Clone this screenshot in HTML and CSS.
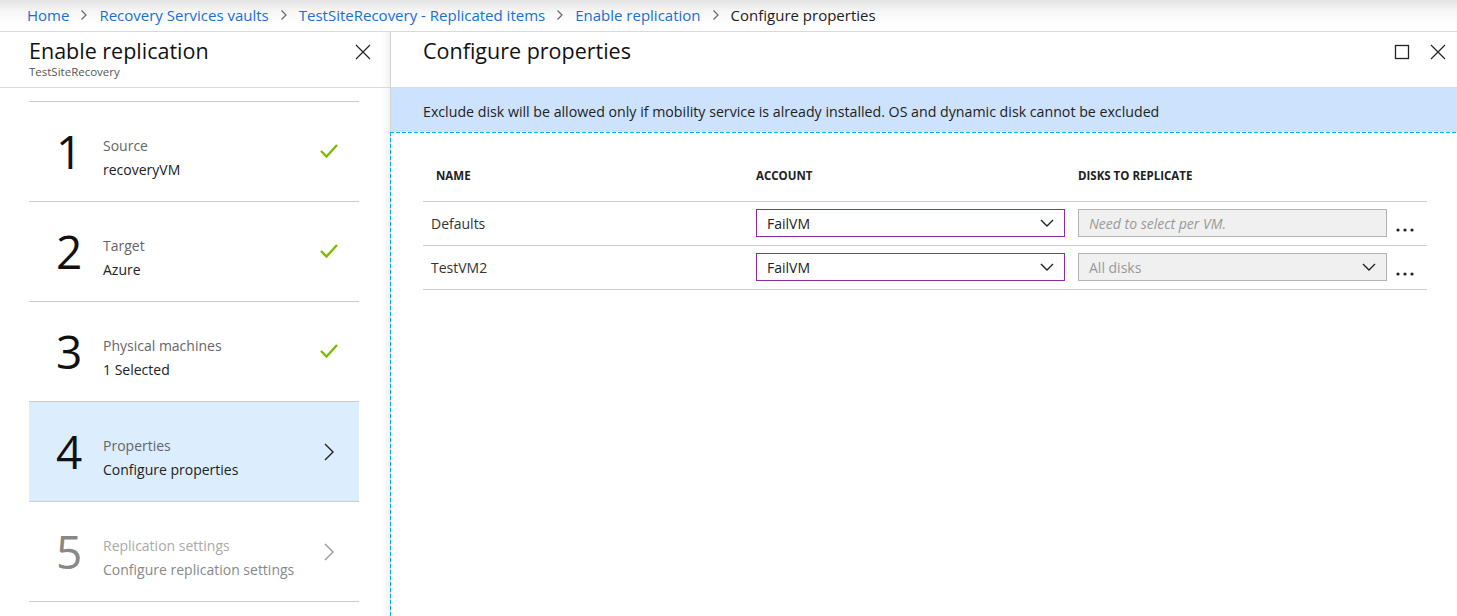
FILE: index.html
```html
<!DOCTYPE html>
<html lang="en">
<head>
<meta charset="utf-8">
<title>Configure properties</title>
<link rel="stylesheet" href="styles.css">
</head>
<body>
<div class="page">
  <nav class="crumbs">
    <a class="crumb-link">Home</a>
    <span class="sep"><svg width="8" height="12" viewBox="0 0 8 12"><path d="M1.5 1.5 L6 6 L1.5 10.5" fill="none" stroke="#666" stroke-width="1.2"/></svg></span>
    <a class="crumb-link">Recovery Services vaults</a>
    <span class="sep"><svg width="8" height="12" viewBox="0 0 8 12"><path d="M1.5 1.5 L6 6 L1.5 10.5" fill="none" stroke="#666" stroke-width="1.2"/></svg></span>
    <a class="crumb-link">TestSiteRecovery - Replicated items</a>
    <span class="sep"><svg width="8" height="12" viewBox="0 0 8 12"><path d="M1.5 1.5 L6 6 L1.5 10.5" fill="none" stroke="#666" stroke-width="1.2"/></svg></span>
    <a class="crumb-link">Enable replication</a>
    <span class="sep"><svg width="8" height="12" viewBox="0 0 8 12"><path d="M1.5 1.5 L6 6 L1.5 10.5" fill="none" stroke="#666" stroke-width="1.2"/></svg></span>
    <span class="crumb-current">Configure properties</span>
  </nav>

  <div class="blades">
    <section class="blade blade-left">
      <header class="blade-head left-head">
        <div class="titles">
          <h1 class="blade-title">Enable replication</h1>
          <div class="blade-sub">TestSiteRecovery</div>
        </div>
        <button class="icon-btn close-left" aria-label="Close">
          <svg width="16" height="16" viewBox="0 0 16 16"><path d="M1 1 L15 15 M15 1 L1 15" stroke="#222" stroke-width="1.2"/></svg>
        </button>
      </header>
      <ol class="steps">
        <li class="step">
          <span class="step-num">1</span>
          <div class="step-text"><div class="step-label">Source</div><div class="step-value">recoveryVM</div></div>
          <svg class="step-icon" width="20" height="16" viewBox="0 0 20 16"><path d="M2 8 L7.5 13.5 L18 2" fill="none" stroke="#7fba00" stroke-width="2.4"/></svg>
        </li>
        <li class="step">
          <span class="step-num">2</span>
          <div class="step-text"><div class="step-label">Target</div><div class="step-value">Azure</div></div>
          <svg class="step-icon" width="20" height="16" viewBox="0 0 20 16"><path d="M2 8 L7.5 13.5 L18 2" fill="none" stroke="#7fba00" stroke-width="2.4"/></svg>
        </li>
        <li class="step">
          <span class="step-num">3</span>
          <div class="step-text"><div class="step-label">Physical machines</div><div class="step-value">1 Selected</div></div>
          <svg class="step-icon" width="20" height="16" viewBox="0 0 20 16"><path d="M2 8 L7.5 13.5 L18 2" fill="none" stroke="#7fba00" stroke-width="2.4"/></svg>
        </li>
        <li class="step step-active">
          <span class="step-num">4</span>
          <div class="step-text"><div class="step-label">Properties</div><div class="step-value">Configure properties</div></div>
          <svg class="step-icon chev" width="12" height="20" viewBox="0 0 12 20"><path d="M2 2 L10 10 L2 18" fill="none" stroke="#222" stroke-width="1.4"/></svg>
        </li>
        <li class="step step-disabled">
          <span class="step-num">5</span>
          <div class="step-text"><div class="step-label">Replication settings</div><div class="step-value">Configure replication settings</div></div>
          <svg class="step-icon chev" width="12" height="20" viewBox="0 0 12 20"><path d="M2 2 L10 10 L2 18" fill="none" stroke="#999" stroke-width="1.4"/></svg>
        </li>
      </ol>
    </section>

    <section class="blade blade-right">
      <header class="blade-head right-head">
        <h1 class="blade-title">Configure properties</h1>
        <div class="head-actions">
          <button class="icon-btn" aria-label="Maximize">
            <svg width="16" height="16" viewBox="0 0 16 16"><rect x="1.5" y="1.5" width="13" height="13" fill="none" stroke="#222" stroke-width="1.3"/></svg>
          </button>
          <button class="icon-btn" aria-label="Close">
            <svg width="16" height="16" viewBox="0 0 16 16"><path d="M1 1 L15 15 M15 1 L1 15" stroke="#222" stroke-width="1.2"/></svg>
          </button>
        </div>
      </header>
      <div class="info">Exclude disk will be allowed only if mobility service is already installed. OS and dynamic disk cannot be excluded</div>
      <div class="content">
        <div class="grid">
          <div class="th">NAME</div>
          <div class="th">ACCOUNT</div>
          <div class="th th-disks">DISKS TO REPLICATE</div>

          <div class="td name">Defaults</div>
          <div class="td"><div class="select account"><span>FailVM</span><svg width="14" height="8" viewBox="0 0 14 8"><path d="M1 1 L7 7 L13 1" fill="none" stroke="#222" stroke-width="1.4"/></svg></div></div>
          <div class="td disks"><div class="select disabled"><span class="placeholder">Need to select per VM.</span></div><svg class="more" width="18" height="4" viewBox="0 0 18 4"><circle cx="2" cy="2" r="1.6" fill="#222"/><circle cx="9" cy="2" r="1.6" fill="#222"/><circle cx="16" cy="2" r="1.6" fill="#222"/></svg></div>

          <div class="td name">TestVM2</div>
          <div class="td"><div class="select account"><span>FailVM</span><svg width="14" height="8" viewBox="0 0 14 8"><path d="M1 1 L7 7 L13 1" fill="none" stroke="#222" stroke-width="1.4"/></svg></div></div>
          <div class="td disks"><div class="select disabled"><span class="dim">All disks</span><svg width="14" height="8" viewBox="0 0 14 8"><path d="M1 1 L7 7 L13 1" fill="none" stroke="#222" stroke-width="1.4"/></svg></div><svg class="more" width="18" height="4" viewBox="0 0 18 4"><circle cx="2" cy="2" r="1.6" fill="#222"/><circle cx="9" cy="2" r="1.6" fill="#222"/><circle cx="16" cy="2" r="1.6" fill="#222"/></svg></div>
        </div>
      </div>
    </section>
  </div>
</div>
</body>
</html>
```

FILE: styles.css
```css
* { box-sizing: border-box; }
html, body { margin: 0; padding: 0; }
body {
  font-family: "Open Sans", "Noto Sans", sans-serif;
  color: #222;
  background: #fff;
  width: 1457px;
  height: 616px;
  overflow: hidden;
}
.page { display: flex; flex-direction: column; height: 616px; }

.crumbs {
  height: 32px;
  flex: none;
  display: flex;
  align-items: center;
  padding: 0 0 2px 27px;
  gap: 11px;
  font-size: 15px;
  background: linear-gradient(#e4e4e4 0px, #f7f7f7 12px, #ffffff 24px);
  border-bottom: 1px solid #d9d9d9;
}
.crumb-link { color: #1a6fd1; }
.crumb-current { color: #222; }
.sep { display: flex; align-items: center; }

.blades { flex: 1; display: flex; min-height: 0; }
.blade { display: flex; flex-direction: column; min-height: 0; }
.blade-left {
  width: 391px;
  flex: none;
  border-right: 1px solid #d4d4d4;
  box-shadow: -8px 0 8px -6px rgba(0,0,0,0.08) inset;
}
.blade-right { flex: 1; min-width: 0; }

.blade-head {
  height: 56px;
  flex: none;
  border-bottom: 1px solid #d9d9d9;
  display: flex;
  justify-content: space-between;
}
.left-head { padding: 5px 18px 0 29px; }
.right-head { padding: 5px 10px 0 32px; }
.blade-title {
  margin: 0;
  font-size: 21.5px;
  font-weight: 400;
  line-height: 28px;
  color: #111;
}
.blade-sub { font-size: 11.5px; color: #555; line-height: 14px; margin-top: 0; }
.icon-btn {
  border: 0;
  background: none;
  padding: 0;
  width: 18px;
  height: 18px;
  margin-top: 6px;
  display: flex;
  align-items: center;
  justify-content: center;
}
.head-actions { display: flex; gap: 18px; }

.steps {
  list-style: none;
  margin: 13px 0 0 29px;
  padding: 0;
  width: 330px;
  border-top: 1px solid #cccccc;
}
.step {
  height: 100px;
  border-bottom: 1px solid #cccccc;
  display: flex;
  align-items: center;
  padding: 0 20px 0 27px;
}
.step-num {
  width: 47px;
  font-size: 46px;
  line-height: 1;
  color: #111;
  margin-top: -2px;
}
.step-text { flex: 1; font-size: 14px; line-height: 24px; margin-top: 12px; }
.step-label { color: #666; }
.step-value { color: #222; }
.step-icon { flex: none; margin-top: -2px; }
.chev { margin-top: 1px; margin-right: 4px; }
.step-active { background: #dcedfd; }
.step-disabled .step-num { color: #888; }
.step-disabled .step-label { color: #aaa; }
.step-disabled .step-value { color: #888; }

.info {
  height: 44px;
  flex: none;
  background: #cde2fc;
  font-size: 14.2px;
  color: #222;
  display: flex;
  align-items: center;
  padding: 3px 0 0 32px;
}
.content {
  flex: 1;
  margin-left: -1px;
  background:
    repeating-linear-gradient(to right, #00b4f0 0 4px, transparent 4px 6px) top left / 100% 1px no-repeat,
    repeating-linear-gradient(to bottom, #00b4f0 0 4px, transparent 4px 6px) top left / 1px 100% no-repeat;
  padding: 28px 30px 0 33px;
}
.grid {
  display: grid;
  grid-template-columns: 333px 322px 349px;
  width: 1004px;
}
.th {
  font-size: 11.5px;
  font-weight: 700;
  color: #222;
  height: 42px;
  padding: 8px 0 0 13px;
  border-bottom: 1px solid #cfcfcf;
}
.th + .th { padding-left: 0; }
.td {
  height: 44px;
  border-bottom: 1px solid #cfcfcf;
  display: flex;
  align-items: center;
  font-size: 14px;
}
.td.name { padding-left: 8px; color: #333; }
.select {
  width: 309px;
  height: 28px;
  display: flex;
  align-items: center;
  justify-content: space-between;
  padding: 0 10px 0 10px;
  font-size: 14px;
  margin-top: -1px;
}
.account { border: 1px solid #8a2da5; color: #222; }
.disabled { border: 1px solid #b3b3b3; background: #f0f0f0; }
.placeholder { font-style: italic; color: #999; }
.dim { color: #999; }
.more {
  flex: none;
  margin: 12px 0 0 9px;
}
```
